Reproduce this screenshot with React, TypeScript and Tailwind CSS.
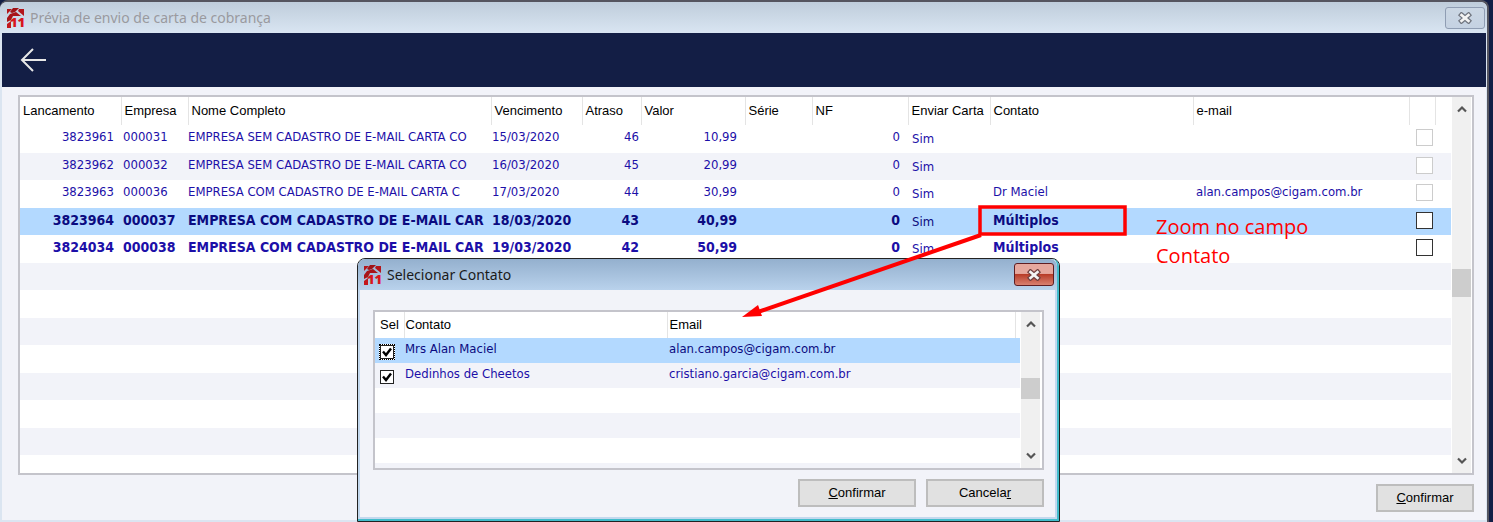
import React from 'react';

interface Entry {
  id: string;
  company: string;
  name: string;
  dueDate: string;
  delay: string;
  value: string;
  contact: string;
  email: string;
  multiple?: boolean;
  selected?: boolean;
}

const entries: Entry[] = [
  { id: '3823961', company: '000031', name: 'EMPRESA SEM CADASTRO DE E-MAIL CARTA CO', dueDate: '15/03/2020', delay: '46', value: '10,99', contact: '', email: '' },
  { id: '3823962', company: '000032', name: 'EMPRESA SEM CADASTRO DE E-MAIL CARTA CO', dueDate: '16/03/2020', delay: '45', value: '20,99', contact: '', email: '' },
  { id: '3823963', company: '000036', name: 'EMPRESA COM CADASTRO DE E-MAIL CARTA C', dueDate: '17/03/2020', delay: '44', value: '30,99', contact: 'Dr Maciel', email: 'alan.campos@cigam.com.br' },
  { id: '3823964', company: '000037', name: 'EMPRESA COM CADASTRO DE E-MAIL CAR', dueDate: '18/03/2020', delay: '43', value: '40,99', contact: 'Múltiplos', email: '', multiple: true, selected: true },
  { id: '3824034', company: '000038', name: 'EMPRESA COM CADASTRO DE E-MAIL CAR', dueDate: '19/03/2020', delay: '42', value: '50,99', contact: 'Múltiplos', email: '', multiple: true },
];

const contacts = [
  { name: 'Mrs Alan Maciel', email: 'alan.campos@cigam.com.br', selected: true },
  { name: 'Dedinhos de Cheetos', email: 'cristiano.garcia@cigam.com.br', selected: false },
];

const columns = [
  { label: 'Lancamento', width: 'w-[101px]' },
  { label: 'Empresa', width: 'w-[67px]' },
  { label: 'Nome Completo', width: 'w-[303px]' },
  { label: 'Vencimento', width: 'w-[91px]' },
  { label: 'Atraso', width: 'w-[59px]' },
  { label: 'Valor', width: 'w-[104px]' },
  { label: 'Série', width: 'w-[67px]' },
  { label: 'NF', width: 'w-[96px]' },
  { label: 'Enviar Carta', width: 'w-[82px]' },
  { label: 'Contato', width: 'w-[203px]' },
  { label: 'e-mail', width: '' },
  { label: '', width: 'w-[26px]' },
];

const Logo: React.FC = () => (
  <svg width="17" height="20" viewBox="0 0 17 20" className="shrink-0 overflow-visible" aria-hidden="true">
    <path d="M0 1h5L0 6z" fill="#b3151a" />
    <path d="M6 0h6L8 4 5 5 3 4z" fill="#a01216" />
    <path d="M12 1h5v7l-6-5z" fill="#b3151a" />
    <path d="M0 10l3-4 6-2 5 4H6l-2 4-4 2z" fill="#a81418" />
    <path d="M0 16l4-3v7H0z" fill="#c4181d" />
    <text
      x="3"
      y="19"
      fontSize="13"
      fontWeight="800"
      fill="#d8161c"
      fontFamily="Open Sans, sans-serif"
    >
      11
    </text>
  </svg>
);

const CloseGlyph: React.FC<{ stroke: string }> = ({ stroke }) => (
  <svg width="16" height="12" viewBox="0 0 16 12" aria-hidden="true">
    <path d="M4.500 3l7 6M11.500 3l-7 6" stroke={stroke} strokeWidth="5" strokeLinecap="square" />
    <path d="M4.500 3l7 6M11.500 3l-7 6" stroke="#f4f4f4" strokeWidth="2.600" strokeLinecap="square" />
  </svg>
);

const Chevron: React.FC<{ up?: boolean }> = ({ up }) => (
  <svg width="12" height="8" viewBox="0 0 12 8" fill="none" aria-hidden="true">
    <path d={up ? 'M2 6.500l4-4 4 4' : 'M2 1.500l4 4 4-4'} stroke="#555" strokeWidth="2.200" />
  </svg>
);

const headCell = 'border-r border-[#e4e4e4] p-0 text-left font-normal text-black whitespace-nowrap';
const cell = 'p-0 align-top whitespace-nowrap';
const button = "h-7 border-2 border-[#bdbdbd] bg-[#e1e1e1] font-['Liberation_Sans',sans-serif] text-[13px] leading-4 text-black";

const EntriesTable: React.FC = () => (
  <div className="flex min-h-0 flex-1 border-2 border-[#c4c4cb] bg-white">
    <div className="min-w-0 flex-1 overflow-hidden">
      <table className="w-full table-fixed border-collapse font-['DejaVu_Sans_Condensed','DejaVu_Sans',sans-serif] text-[13px] leading-6 text-[#1c0fa8]">
        <thead>
          <tr className="h-7 font-['Liberation_Sans',sans-serif]">
            {columns.map((column, index) => (
              <th key={index} className={`${headCell} ${column.width} pl-[3px]`}>{column.label}</th>
            ))}
            <th className="w-4 p-0"></th>
          </tr>
        </thead>
        <tbody>
          {entries.map((entry) => (
            <tr
              key={entry.id}
              className={`odd:h-7 even:h-[27px] ${entry.selected ? 'bg-[#b3d9ff] text-[#0b0b80]' : 'even:bg-[#f2f3f9]'} ${entry.multiple ? 'text-[14px] font-bold' : ''}`}
            >
              <td className={`${cell} pr-[7px] text-right`}>{entry.id}</td>
              <td className={`${cell} pl-[2px]`}>{entry.company}</td>
              <td className={cell}>{entry.name}</td>
              <td className={`${cell} pl-px`}>{entry.dueDate}</td>
              <td className={`${cell} pr-[2px] text-right`}>{entry.delay}</td>
              <td className={`${cell} pr-2 text-right`}>{entry.value}</td>
              <td className={cell}></td>
              <td className={`${cell} pr-2 text-right`}>0</td>
              <td className={`${cell} pl-1 pt-[2px] text-[13px] font-normal`}>Sim</td>
              <td className={`${cell} pl-[3px]`}>{entry.contact}</td>
              <td className={`${cell} pl-[3px]`}>{entry.email}</td>
              <td className={`${cell} pl-[7px] pt-1`}>
                <input
                  type="checkbox"
                  aria-label={`Selecionar ${entry.id}`}
                  disabled={!entry.multiple}
                  className="block size-[17px] appearance-none border border-[#333] bg-white disabled:border-[#ccc]"
                />
              </td>
              <td className={cell}></td>
            </tr>
          ))}
          {Array.from({ length: 8 }).map((_, index) => (
            <tr key={index} className="odd:h-7 even:h-[27px] even:bg-[#f2f3f9]">
              <td colSpan={13} className="p-0"></td>
            </tr>
          ))}
        </tbody>
      </table>
    </div>
    <div className="relative mx-px flex w-[19px] flex-col items-center justify-between bg-[#f0f0f0] py-2">
      <Chevron up />
      <div className="absolute top-[172px] h-7 w-[19px] bg-[#cdcdcd]"></div>
      <Chevron />
    </div>
  </div>
);

const ContactDialog: React.FC = () => (
  <section
    role="dialog"
    aria-label="Selecionar Contato"
    className="absolute top-[258px] left-[357px] w-[703px] rounded-t-lg border border-[#222] bg-[#f2f3f9]"
  >
    <div className="rounded-t-[7px] border-r-2 border-b-2 border-[#42bccb]">
      <header className="flex h-[31px] items-center gap-[6px] rounded-t-[7px] bg-linear-to-b from-[#94b0ce] to-[#b9d2ec] pr-[3px] pl-[6px]">
        <Logo />
        <h2 className="flex-1 font-['Noto_Sans',sans-serif] text-sm text-[#1a1a1a]">Selecionar Contato</h2>
        <button
          aria-label="Fechar"
          className="flex h-[23px] w-10 items-center justify-center rounded-[3px] border border-[#5f1e23] bg-linear-to-b from-[#e6a89e] from-45% via-[#b83c28] via-50% to-[#d88070]"
        >
          <CloseGlyph stroke="#704040" />
        </button>
      </header>
      <div className="border-x-2 border-b-2 border-[#c3d8ee] pt-5 pr-[11px] pb-[10px] pl-[13px]">
        <div className="flex h-[160px] border-2 border-[#c4c4cb] bg-white">
          <div className="min-w-0 flex-1 overflow-hidden">
            <table className="w-full table-fixed border-collapse font-['DejaVu_Sans_Condensed','DejaVu_Sans',sans-serif] text-[13px] leading-[22px] text-[#1c0fa8]">
              <thead>
                <tr className="h-[26px] font-['Liberation_Sans',sans-serif]">
                  <th className={`${headCell} w-[29px] pl-[5px]`}>Sel</th>
                  <th className={`${headCell} w-[263px] pl-px`}>Contato</th>
                  <th className={`${headCell} pl-[2px]`}>Email</th>
                  <th className="w-[5px] p-0"></th>
                </tr>
              </thead>
              <tbody>
                {contacts.map((contact) => (
                  <tr key={contact.name} className={`h-[25px] ${contact.selected ? 'bg-[#b3d9ff] text-[#0b0b80]' : 'even:bg-[#f2f3f9]'}`}>
                    <td className="p-0 pl-1 align-top">
                      <label className={`relative mt-[6px] flex size-4 items-center justify-center ${contact.selected ? 'bg-white outline-1 -outline-offset-1 outline-dotted outline-black' : ''}`}>
                        <input type="checkbox" defaultChecked aria-label={contact.name} className="size-[14px] appearance-none border border-[#222] bg-white" />
                        <svg viewBox="0 0 10 10" className="absolute size-[10px]" fill="none" aria-hidden="true">
                          <path d="M1 4.500l3 3.500 5-6.500" stroke="#000" strokeWidth="2.400" />
                        </svg>
                      </label>
                    </td>
                    <td className={`${cell} pl-px`}>{contact.name}</td>
                    <td className={`${cell} pl-[2px]`}>{contact.email}</td>
                    <td className="p-0"></td>
                  </tr>
                ))}
                {Array.from({ length: 4 }).map((_, index) => (
                  <tr key={index} className="h-[25px] even:bg-[#f2f3f9]">
                    <td colSpan={4} className="p-0"></td>
                  </tr>
                ))}
              </tbody>
            </table>
          </div>
          <div className="relative mr-[2px] ml-px flex w-[19px] flex-col items-center justify-between bg-[#f0f0f0] py-2">
            <Chevron up />
            <div className="absolute top-[66px] h-[21px] w-[19px] bg-[#cdcdcd]"></div>
            <Chevron />
          </div>
        </div>
        <footer className="mt-[9px] flex justify-end gap-[10px]">
          <button className={`${button} w-[118px]`}><u>C</u>onfirmar</button>
          <button className={`${button} w-[118px]`}>Cancela<u>r</u></button>
        </footer>
      </div>
    </div>
  </section>
);

const Annotation: React.FC = () => (
  <>
    <svg className="pointer-events-none absolute inset-0 size-full" fill="none" aria-hidden="true">
      <rect x="980" y="207" width="145" height="27" stroke="#f00" strokeWidth="3.500" />
      <path d="M981 235L758 312" stroke="#f00" strokeWidth="4" />
      <path d="M742 317l16-12 4 11z" fill="#f00" />
    </svg>
    <p className="absolute top-[212px] left-[1156px] w-[180px] font-['Open_Sans',sans-serif] text-xl leading-[29px] text-[#f00]">
      Zoom no campo Contato
    </p>
  </>
);

const App: React.FC = () => {
  return (
    <main className="relative flex h-screen flex-col overflow-hidden bg-[#131e45] pr-1">
      <div className="flex min-h-0 flex-1 flex-col rounded-t-lg border-t-2 border-r-2 border-[#55555f] bg-[#dbe5f1]">
        <header className="flex h-[31px] shrink-0 items-center gap-[6px] rounded-t-[7px] bg-linear-to-b from-[#bfcddb] to-[#d9e5f2] pr-[2px] pl-[7px]">
          <Logo />
          <h1 className="flex-1 font-['Noto_Sans',sans-serif] text-sm text-[#9a9a9f]">Prévia de envio de carta de cobrança</h1>
          <button
            aria-label="Fechar"
            className="flex h-[22px] w-10 items-center justify-center rounded-[3px] border border-[#8f9db3] bg-linear-to-b from-[#cbd7e4] to-[#c5d2e2]"
          >
            <CloseGlyph stroke="#70757f" />
          </button>
        </header>
        <div className="mr-px mb-[2px] ml-[2px] flex min-h-0 flex-1 flex-col bg-[#f2f3f9]">
          <nav className="flex h-[54px] shrink-0 items-center bg-[#131e45] pl-[18px]">
            <button aria-label="Voltar">
              <svg width="28" height="24" viewBox="0 0 28 24" fill="none" aria-hidden="true">
                <path d="M26 12H2M13 1L2 12l11 11" stroke="#e8e8e8" strokeWidth="2" />
              </svg>
            </button>
          </nav>
          <div className="flex min-h-0 flex-1 flex-col pt-2 pr-3 pb-2 pl-4">
            <EntriesTable />
            <footer className="mt-[9px] flex justify-end">
              <button className={`${button} w-[98px]`}><u>C</u>onfirmar</button>
            </footer>
          </div>
        </div>
      </div>
      <ContactDialog />
      <Annotation />
    </main>
  );
};

export default App;
